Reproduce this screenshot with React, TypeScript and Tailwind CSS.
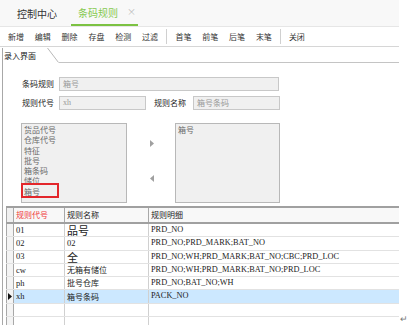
type Row = {
    code: string;
    name: string;
    big?: boolean;
    latinName?: boolean;
    detail: string;
    selected?: boolean;
};

const rows: Row[] = [
    { code: "01", name: "品号", big: true, detail: "PRD_NO" },
    { code: "02", name: "02", latinName: true, detail: "PRD_NO;PRD_MARK;BAT_NO" },
    { code: "03", name: "全", big: true, detail: "PRD_NO;WH;PRD_MARK;BAT_NO;CBC;PRD_LOC" },
    { code: "cw", name: "无箱有储位", detail: "PRD_NO;WH;PRD_MARK;BAT_NO;PRD_LOC" },
    { code: "ph", name: "批号仓库", detail: "PRD_NO;BAT_NO;WH" },
    { code: "xh", name: "箱号条码", detail: "PACK_NO", selected: true },
    { code: "", name: "", detail: "" },
    { code: "", name: "", detail: "" },
];

const fields = ["货品代号", "仓库代号", "特征", "批号", "箱条码", "储位", "箱号"];

const cjk = "font-['Noto_Sans_CJK_SC','Noto_Sans',sans-serif]";
const serif = "font-['Liberation_Serif','Noto_Sans_CJK_SC',serif]";

function ToolGroup({ items }: { items: string[] }) {
    return (
        <div className="flex gap-[10.8px]">
            {items.map((t) => (
                <span key={t} className="w-[16px] whitespace-nowrap">
                    {t}
                </span>
            ))}
        </div>
    );
}

export default function App() {
    return (
        <div className={`relative w-[416px] h-[325px] overflow-hidden bg-white text-[#222] ${cjk}`}>
            <div className="w-[399px]">
                {/* tab bar */}
                <div className="flex h-[27px] items-stretch bg-[#f8f8f8] border-b border-[#e6e6e6]">
                    <div className="flex w-[71px] items-center whitespace-nowrap pl-[17px] text-[10px] text-[#333]">
                        控制中心
                    </div>
                    <div className="flex w-[67px] items-center whitespace-nowrap border-b-2 border-[#7cc242] pl-[7px] text-[10px] text-[#86c94f]">
                        条码规则
                        <span className="ml-[9px] text-[9px] text-[#bbb]">×</span>
                    </div>
                </div>

                {/* toolbar */}
                <div className="flex h-[20px] items-center border-b border-[#d6d6d6] pl-[8px] text-[8px] text-[#333]">
                    <ToolGroup items={["新增", "编辑", "删除", "存盘", "检测", "过滤"]} />
                    <div className="ml-[8.5px] mr-[8px] h-[15px] w-px bg-[#d0d0d0]" />
                    <ToolGroup items={["首笔", "前笔", "后笔", "末笔"]} />
                    <div className="ml-[8.5px] mr-[7.5px] h-[15px] w-px bg-[#d0d0d0]" />
                    <span>关闭</span>
                </div>

                {/* panel */}
                <div className="ml-[2px] mt-px border-l border-[#a8a8a8]">
                    <div className="flex h-[15px] items-stretch">
                        <div className="flex w-[44px] items-center whitespace-nowrap pl-px text-[8px] text-[#222]">
                            录入界面
                        </div>
                        <svg width="12" height="15" className="block">
                            <line x1="0.5" y1="0" x2="11.5" y2="14.5" stroke="#b8b8b8" strokeWidth="1" />
                        </svg>
                        <div className="flex-1 border-b border-[#c4c4c4]" />
                    </div>

                    {/* form */}
                    <div className="pt-[14px] text-[8px]">
                        <div className="flex h-[14px] items-center">
                            <span className="w-[56px] pr-[5px] text-right text-[#222]">条码规则</span>
                            <div className="flex h-[14px] w-[220px] items-center border border-[#c8c8c8] bg-[#f0f0f0] pl-[3px] text-[#999]">
                                箱号
                            </div>
                        </div>
                        <div className="mt-[5px] flex h-[14px] items-center">
                            <span className="w-[56px] pr-[5px] text-right text-[#222]">规则代号</span>
                            <div className={`flex h-[14px] w-[87px] items-center border border-[#c8c8c8] bg-[#f0f0f0] pl-[3px] text-[#999] ${serif}`}>
                                xh
                            </div>
                            <span className="ml-[8px] w-[39px] text-[#222]">规则名称</span>
                            <div className="flex h-[14px] w-[87px] items-center border border-[#c8c8c8] bg-[#f0f0f0] pl-[3px] text-[#999]">
                                箱号条码
                            </div>
                        </div>

                        {/* list boxes */}
                        <div className="mt-[13px] flex pl-[18px]">
                            <div className="relative h-[80px] w-[106px] border border-[#b8b8b8] bg-[#f0f0f0] pl-[2px] pt-px text-[#6a6a6a] leading-[10.3px]">
                                {fields.map((f) => (
                                    <div key={f}>{f}</div>
                                ))}
                                <div className="absolute left-[-1px] top-[59px] h-[15px] w-[38px] border-2 border-[#e3262b]" />
                            </div>
                            <div className="flex w-[48px] flex-col items-center pt-[17px]">
                                <svg width="4" height="7" className="ml-[2px]">
                                    <polygon points="0,0 4,3.5 0,7" fill="#a0a0a0" />
                                </svg>
                                <svg width="4" height="7" className="ml-[2px] mt-[28px]">
                                    <polygon points="4,0 0,3.5 4,7" fill="#a0a0a0" />
                                </svg>
                            </div>
                            <div className="h-[80px] w-[105px] border border-[#b8b8b8] bg-[#f0f0f0] pl-[2px] pt-px text-[#6a6a6a] leading-[10.3px]">
                                箱号
                            </div>
                        </div>
                    </div>

                    {/* grid */}
                    <div className="ml-[3px] mt-[3px] text-[8px]">
                        <div className="flex h-[18px] border-y-2 border-[#a0a0a0] bg-[#f8f8f8]">
                            <div className="w-[8px] border-x border-[#a8a8a8] bg-[#f0f0f0]" />
                            <div className="flex w-[51px] items-center border-r border-[#a8a8a8] pl-[2px] text-[#f03a3a]">
                                规则代号
                            </div>
                            <div className="flex w-[84px] items-center border-r border-[#a8a8a8] pl-[2px]">
                                规则名称
                            </div>
                            <div className="flex flex-1 items-center pl-[2px]">规则明细</div>
                        </div>
                        {rows.map((r, i) => (
                            <div key={i} className="flex h-[13.3px] border-b border-[#e2e2e2]">
                                <div className="relative flex w-[8px] items-center border-x border-[#a8a8a8] bg-[#f4f4f4]">
                                    {r.selected && (
                                        <svg width="4" height="7" className="ml-[1px]">
                                            <polygon points="0,0 4,3.5 0,7" fill="#111" />
                                        </svg>
                                    )}
                                </div>
                                <div className={`flex flex-1 ${r.selected ? "bg-[#cce8ff]" : ""}`}>
                                    <div className={`flex w-[51px] items-center border-r border-[#d0d0d0] pl-[2px] text-[8.5px] ${serif}`}>
                                        {r.code}
                                    </div>
                                    <div
                                        className={`flex w-[84px] items-center border-r border-[#d0d0d0] pl-[2px] ${
                                            r.big ? "text-[11px]" : r.latinName ? `text-[8.5px] ${serif}` : "text-[8px]"
                                        }`}
                                    >
                                        {r.name}
                                    </div>
                                    <div className={`flex flex-1 items-center whitespace-nowrap pl-[2px] text-[8.3px] ${serif}`}>
                                        {r.detail}
                                    </div>
                                </div>
                            </div>
                        ))}
                    </div>
                </div>
            </div>
            <span className="absolute left-[400px] top-[312px] text-[9px] text-[#777]">↵</span>
        </div>
    );
}
